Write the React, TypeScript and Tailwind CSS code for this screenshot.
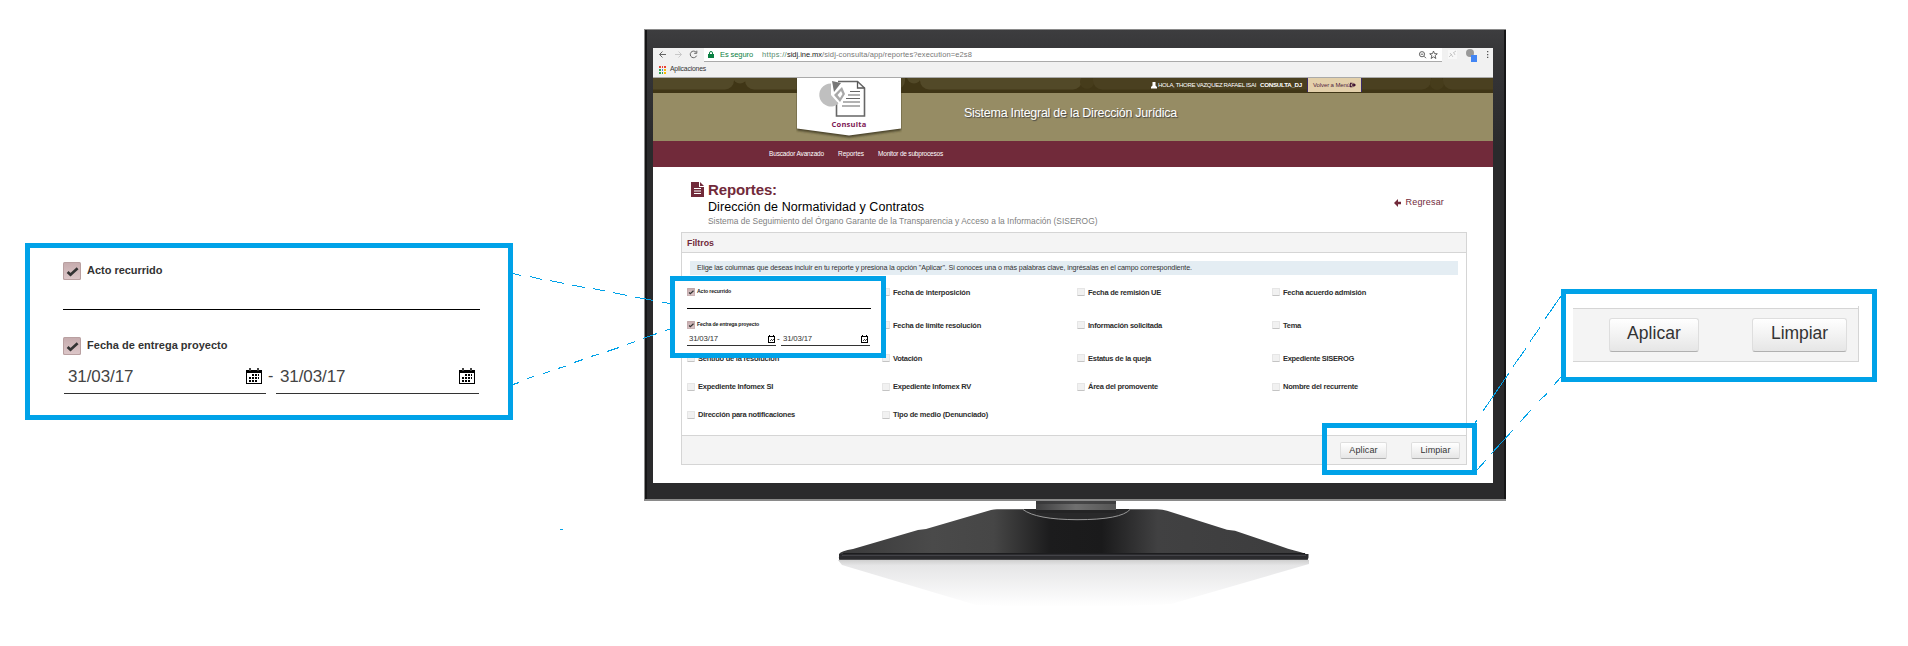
import { useLayoutEffect, useRef, useState } from "react";
import type { ReactNode } from "react";

/* One line of text whose tracking is adjusted so that it fills a given width. */
function Fit({ w, children, className = "" }: { w: number; children: string; className?: string }) {
  const ref = useRef<HTMLSpanElement>(null);
  const [spacing, setSpacing] = useState(0);
  useLayoutEffect(() => {
    if (!ref.current) return;
    const natural = ref.current.getBoundingClientRect().width;
    setSpacing((w - natural) / children.length);
  }, []);
  return (
    <span ref={ref} className={`inline-block whitespace-nowrap leading-none ${className}`} style={{ letterSpacing: spacing }}>
      {children}
    </span>
  );
}

function Calendar() {
  return (
    <svg viewBox="0 0 16 16" className="h-4 w-4" shapeRendering="crispEdges">
      <path fill="#000" fillRule="evenodd" d="M0 2h16v14H0zM1 5v10h14V5z" />
      <path fill="#444" d="M3 0h2v3H3zM11 0h2v3h-2z" />
      <path fill="#000" d="M6 6h2v2H6zM9 6h2v2H9zM12 6h1v2h-1zM3 9h2v2H3zM6 9h2v2H6zM9 9h2v2H9zM12 9h1v2h-1zM3 12h2v2H3zM6 12h2v2H6zM9 12h2v2H9z" />
    </svg>
  );
}

function SmallCalendar() {
  return (
    <svg viewBox="0 0 7 8" className="h-2 w-[7px]" shapeRendering="crispEdges" fill="#000">
      <path d="M0 1h7v1H0zM0 7h7v1H0zM0 2h1v5H0zM6 2h1v5H6zM1 0h1v1H1zM5 0h1v1H5z" />
      <path d="M3 4h1v1H3zM5 4h1v1H5zM2 5h1v1H2zM4 5h1v1H4z" opacity=".75" />
    </svg>
  );
}

function Checked({ className }: { className: string }) {
  return (
    <svg viewBox="0 0 18 18" className={className}>
      <defs>
        <linearGradient id="chk" x2="0" y2="1">
          <stop stopColor="#c6acae" />
          <stop offset="1" stopColor="#dcc6c8" />
        </linearGradient>
      </defs>
      <rect width="18" height="18" rx="1.5" fill="#b9a0a1" />
      <rect x="1" y="1" width="16" height="16" rx="1" fill="url(#chk)" />
      <path d="M4.6 10 7.500 12.700 14.600 6.300" fill="none" stroke="#333" strokeWidth="2.700" />
    </svg>
  );
}

function Box() {
  return <span className="h-2 w-2 shrink-0 rounded-[1px] border border-[#e6e6e6] border-b-[#c4c4c4] bg-[#f1f1f1]" />;
}

function Item({ label, w }: { label: string; w: number }) {
  return (
    <div className="flex items-center gap-[3px]">
      <Box />
      <Fit w={w} className="pt-px text-[7.500px] font-bold text-[#2d2d2d]">{label}</Fit>
    </div>
  );
}

function Button({ className, children }: { className: string; children: ReactNode }) {
  return (
    <button className={`flex items-center justify-center border border-[#dedede] border-b-[#b0b0b0] bg-linear-to-b from-white to-[#e6e6e6] text-[#333] ${className}`}>
      {children}
    </button>
  );
}

function BrowserBar() {
  return (
    <div className="flex h-[30px] flex-col border-b border-[#aaa] bg-[#f1f1f1]">
      <div className="flex h-[14px]">
        <svg viewBox="0 0 51 14" className="h-[14px] w-[51px]" fill="none" stroke="#666" strokeWidth="1">
          <path d="M13 6.5H6.5M9.5 3.5l-3 3 3 3" />
          <path stroke="#c9c9c9" d="M22 6.5h6.5M25.5 3.5l3 3-3 3" />
          <path d="M43 4.2a3.3 3.3 0 1 0 .6 3.5M43.8 2.7v2.6h-2.6" />
        </svg>
        <div className="flex h-[14px] w-[738px] items-center border-b border-[#aaa] bg-white pl-1">
          <svg viewBox="0 0 6 7" className="mr-[6px] h-[7px] w-[6px]" fill="#0b8043">
            <path d="M0 3h6v4H0z" />
            <path d="M1.500 3.500V2a1.500 1.500 0 0 1 3 0v1.500" fill="none" stroke="#0b8043" />
          </svg>
          <Fit w={33} className="mr-[9px] text-[7.500px] text-[#0b8043]">Es seguro</Fit>
          <Fit w={25} className="text-[7.500px] text-[#568c6e]">https://</Fit>
          <Fit w={35} className="text-[7.500px] text-[#222]">sidj.ine.mx</Fit>
          <Fit w={150} className="text-[7.500px] text-[#777]">/sidj-consulta/app/reportes?execution=e2s8</Fit>
          <svg viewBox="0 0 24 10" className="mr-[3px] ml-auto h-[10px] w-6" fill="none" stroke="#555" strokeWidth=".9">
            <circle cx="7" cy="4.2" r="2.600" />
            <path d="m9 6.200 2 2M5.700 4.200h2.600" />
            <path d="m18.500 1 1 2.600 2.800.2-2.200 1.800.8 2.900-2.400-1.600-2.400 1.600.8-2.900-2.200-1.800 2.800-.2z" />
          </svg>
        </div>
        <svg viewBox="0 0 51 14" className="h-[14px] w-[51px]">
          <rect x="6" y="2" width="9" height="9" fill="#f8f8f8" />
          <path d="m7 9 3-3m1-1 3-2M8 5l3 4m1-4 1 2" stroke="#bbb" fill="none" strokeWidth=".8" />
          <circle cx="28" cy="5" r="4" fill="#999" />
          <path d="M29 7h6v7h-6z" fill="#4285f4" />
          <path d="M45 3h1.300v1.300H45zM45 5.900h1.300v1.300H45zM45 8.800h1.300v1.300H45z" fill="#555" />
        </svg>
      </div>
      <div className="flex flex-1 items-center pl-[6px]">
        <svg viewBox="0 0 7 8" className="mr-1 h-2 w-[7px]" shapeRendering="crispEdges">
          <path fill="#ea4335" d="M0 0h2v2H0zM3 0h1v2H3zM5 0h2v2H5z" />
          <path fill="#34a853" d="M0 3h2v2H0zM3 6h1v2H3zM0 6h2v2H0z" />
          <path fill="#4285f4" d="M3 3h1v2H3z" />
          <path fill="#fbbc05" d="M5 3h2v2H5zM5 6h2v2H5z" />
        </svg>
        <Fit w={36} className="text-[6.800px] text-[#333]">Aplicaciones</Fit>
      </div>
    </div>
  );
}

function SiteHeader() {
  return (
    <header className="relative flex flex-col text-white">
      <div className="relative h-[15px] bg-[#403616]">
        <svg viewBox="0 0 840 15" className="absolute inset-0 h-[15px] w-[840px]" fill="#524928">
          <rect x="-20" y="-8" width="101" height="19.500" rx="9" />
          <circle cx="87" cy="-1.500" r="7" />
          <rect x="92" y="-8" width="160" height="19.500" rx="9" />
          <circle cx="261" cy="-1.500" r="7" />
          <rect x="267" y="-8" width="162" height="19.500" rx="9" />
          <circle cx="434" cy="4" r="7" fill="#463c1b" />
          <rect x="440" y="-8" width="338" height="19.500" rx="9" fill="#4a4020" />
          <circle cx="784" cy="5" r="7" fill="#463c1b" />
          <rect x="790" y="-8" width="70" height="19.500" rx="9" fill="#4a4020" />
        </svg>
        <div className="relative flex h-[14px] items-center pl-[498px]">
          <svg viewBox="0 0 6 7" className="mr-px h-[7px] w-[6px]" fill="#fff">
            <path d="M1.500 0h3v3.400L6 5v1.500H0V5l1.500-1.600z" />
          </svg>
          <Fit w={98} className="mr-1 text-[6px]">HOLA, THORE VAZQUEZ RAFAEL ISAI</Fit>
          <Fit w={42} className="text-[6.200px] font-bold">CONSULTA_DJ</Fit>
          <div className="ml-[5px] flex h-[14px] w-[55px] items-center border-x border-[#3b2c6b] bg-[#e3d0ab] pl-[5px] text-[#521f40]">
            <Fit w={37} className="text-[6px]">Volver a Menú</Fit>
            <svg viewBox="0 0 7 7" className="h-[6px] w-[6px]" fill="#3c1030">
              <path d="M0 1h3v1H1v3h2v1H0zM2 2.700h2V1l3 2.500L4 6V4.300H2z" />
            </svg>
          </div>
        </div>
      </div>
      <div className="flex h-12 bg-[#968c64] pt-[14px] pl-[311px]">
        <Fit w={213} className="text-[12.500px] [text-shadow:1px_1px_1px_#444]">Sistema Integral de la Dirección Jurídica</Fit>
      </div>
      <nav className="flex h-[26px] items-center gap-[14px] bg-[#712a3a] pl-[116px] text-[6.500px]">
        <Fit w={55}>Buscador Avanzado</Fit>
        <Fit w={26}>Reportes</Fit>
        <Fit w={65}>Monitor de subprocesos</Fit>
      </nav>
      <div className="absolute top-0 left-[143px] flex h-[62px] w-[106px] flex-col items-center">
        <svg viewBox="0 0 106 62" className="absolute inset-0 h-[62px] w-[106px]">
          <defs>
            <filter id="soft" x="-10%" y="-10%" width="120%" height="120%">
              <feGaussianBlur stdDeviation=".9" />
            </filter>
          </defs>
          <path d="M1 0h104v52.500L53 59.500 1 52.500z" fill="#3d3820" opacity=".85" filter="url(#soft)" />
          <path d="M1 0h104v50.500L53 57.500 1 50.500z" fill="#fff" />
          <path d="M42 3.500h19.500l7 6.500v28h-28V24" fill="none" stroke="#666" strokeWidth="1.600" />
          <path d="M61.500 3.500v6.500h7" fill="none" stroke="#555" strokeWidth="1.300" />
          <path d="M54 13.500h10M52 17h12M50 20.500h14M47 24h17M46 28h18" stroke="#666" strokeWidth="1.200" />
          <path d="M35 5.500v11.500l7.500 8.500a11.500 11.500 0 1 1-7.500-20z" fill="#bfbfbf" />
          <path d="m36 3 9 2-7 9z" fill="#777" />
          <path d="m46 9 3 7-5 8-6-7z" fill="#a8a8a8" />
          <path d="m45 13 1.500 3-2.500 4-2.500-3z" fill="#fff" />
        </svg>
        <Fit w={35} className="relative mt-[43px] font-['Open_Sans',sans-serif] text-[7.500px] font-bold text-[#7d1754]">Consulta</Fit>
      </div>
    </header>
  );
}

function DateField({ small, className }: { small?: boolean; className: string }) {
  return (
    <div className={`flex items-center justify-between border-[#333] ${className}`}>
      <Fit w={small ? 29 : 65.5} className={small ? "text-[7.800px] text-[#333]" : "text-[17px] text-[#444]"}>31/03/17</Fit>
      {small ? <SmallCalendar /> : <Calendar />}
    </div>
  );
}

/* The first two fields of column one are drawn by the expanded editor above the grid. */
const columns: [string, number][][] = [
  [["Sentido de la resolución", 81], ["Expediente Infomex SI", 75], ["Dirección para notificaciones", 97]],
  [["Fecha de interposición", 77], ["Fecha de límite resolución", 88], ["Votación", 29], ["Expediente Infomex RV", 78], ["Tipo de medio (Denunciado)", 95]],
  [["Fecha de remisión UE", 73], ["Información solicitada", 74], ["Estatus de la queja", 63], ["Área del promovente", 70]],
  [["Fecha acuerdo admisión", 83], ["Tema", 18], ["Expediente SISEROG", 71], ["Nombre del recurrente", 75]],
];

function Filters() {
  return (
    <section className="ml-[28px] flex h-[233px] w-[786px] flex-col border border-[#d5d5d5] bg-white">
      <div className="flex h-5 shrink-0 items-center border-b border-[#d5d5d5] bg-[#f4f4f4] pl-[5px]">
        <Fit w={27} className="pt-px text-[8.800px] font-bold text-[#712a3a]">Filtros</Fit>
      </div>
      <div className="mx-2 mt-2 flex h-[14px] shrink-0 items-center bg-[#e4edf3] pl-[7px]">
        <Fit w={495} className="text-[7.200px] text-[#333]">Elige las columnas que deseas incluir en tu reporte y presiona la opción "Aplicar". Si conoces una o más palabras clave, ingrésalas en el campo correspondiente.</Fit>
      </div>
      <div className="mt-px flex flex-1 pl-[5px]">
        {columns.map((col, i) => (
          <div key={i} className="grid w-[195px] shrink-0 grid-rows-[32px_34px_32px_25px_31px]">
            {i === 0 && <div className="row-span-2" />}
            {col.map(([label, w]) => <Item key={label} label={label} w={w} />)}
          </div>
        ))}
      </div>
      <div className="flex h-[29px] shrink-0 items-center justify-end gap-6 border-t border-[#d5d5d5] bg-[#f4f4f4] pr-[6px] text-[9px]">
        <Button className="h-[17px] w-[47px] rounded-[2px]"><Fit w={28.5}>Aplicar</Fit></Button>
        <Button className="h-[17px] w-[49px] rounded-[2px]"><Fit w={30}>Limpiar</Fit></Button>
      </div>
    </section>
  );
}

function Screen() {
  return (
    <div className="flex h-[435px] w-[840px] flex-col bg-white">
      <BrowserBar />
      <SiteHeader />
      <div className="flex h-[65px] shrink-0 items-start pt-[15px] pl-[38px]">
        <svg viewBox="0 0 13 15" className="mr-1 h-[15px] w-[13px]" fill="#712a3a">
          <path fillRule="evenodd" d="M0 0h8v5h5v10H0zM3 6v1h7V6zM3 8.500v1h7v-1zM3 11v1h7v-1z" />
          <path d="M9 0v4h4z" />
        </svg>
        <div className="flex flex-col items-start">
          <Fit w={69} className="text-[15px] font-bold text-[#712a3a]">Reportes:</Fit>
          <Fit w={216} className="mt-[4px] text-[12.500px] text-black">Dirección de Normatividad y Contratos</Fit>
          <Fit w={389.5} className="mt-[3px] text-[8.400px] text-[#808080]">Sistema de Seguimiento del Órgano Garante de la Transparencia y Acceso a la Información (SISEROG)</Fit>
        </div>
        <div className="mt-[16px] ml-auto flex items-center gap-[5px] pr-[49px]">
          <svg viewBox="0 0 7 8" className="h-2 w-[7px]" fill="#712a3a">
            <path d="M0 4 4 0v2.800h3v2.400H4V8z" />
          </svg>
          <Fit w={38.5} className="text-[9px] text-[#712a3a]">Regresar</Fit>
        </div>
      </div>
      <Filters />
    </div>
  );
}

function Stand() {
  return (
    <svg viewBox="644 501 862 110" className="h-[110px] w-[862px]">
      <defs>
        <linearGradient id="base" x2="1" y2="0">
          <stop stopColor="#3a3a3b" />
          <stop offset=".2" stopColor="#4a4a4a" />
          <stop offset=".33" stopColor="#464646" />
          <stop offset=".45" stopColor="#1c1c1d" />
          <stop offset=".56" stopColor="#1a1a1b" />
          <stop offset=".68" stopColor="#414142" />
          <stop offset="1" stopColor="#3c3c3d" />
        </linearGradient>
        <linearGradient id="reflection" x2="0" y2="1">
          <stop stopColor="#cfcfcf" />
          <stop offset=".12" stopColor="#e6e6e7" />
          <stop offset="1" stopColor="#fff" />
        </linearGradient>
        <linearGradient id="neck" x2="1" y2="0">
          <stop stopColor="#3f3f40" />
          <stop offset=".5" stopColor="#707070" />
          <stop offset="1" stopColor="#555" />
        </linearGradient>
      </defs>
      <path d="M838 560h471v4l-138 40q-80 5-195 1L842 565z" fill="url(#reflection)" />
      <path d="M839 554q2-3 14-5l65-19 8-1 65-19q3-.8 6-.8h160q6 0 10 1.500l60 19 8 1 53 18q16 4 20 6v5H839z" fill="url(#base)" />
      <path d="M839 554h469.500v3.500q0 2-2 2H840q-1.500 0-1-3z" fill="#2b2b2e" />
      <path d="M843 553.500h462" stroke="#1d1d1f" />
      <path d="M842 555.500h464" stroke="#4a4a4f" strokeWidth=".8" />
      <path d="M1023 509h107q-6 11-53 11-42 0-54-11z" fill="#29292a" />
      <path d="M1023 509.500q13 10 54 10.200 44 0 53-10.200" fill="none" stroke="#999" />
      <path d="M1036 501h80v12h-80z" fill="url(#neck)" />
      <path d="M1036 501h80v3h-80z" fill="#353536" opacity=".7" />
      <path d="M1036 510h80v3h-80z" fill="#242425" />
    </svg>
  );
}

function Connectors() {
  return (
    <svg viewBox="0 0 1908 646" className="absolute inset-0 h-[646px] w-[1908px]" fill="none" stroke="#00a2e8" shapeRendering="crispEdges">
      <path d="M513 273.500l8 2M530 276.500l12 3M550 280.500l14 3M572 285l13 2.500M593 288.500l12 2.500M613 292.500l14 3M635 297l18.500 3.500M662 302l8 1.500" />
      <path d="M513 384.500l6-2M527 379l7-3M543 373.500l7-2M558 368.500l8-2.500M574 362.500l9-3M591 356.500l8-2.500M607 351.500l12-4M627 344.500l8-3M643 338.500l14-5M665 330.500l5-1.500" />
      <path d="M1475 423l2-3M1483 411l26-38M1513 366.500l13-18M1530 341.500l10-14M1545 319l16-23" />
      <path d="M1477 470l9-10M1491 454l22-24M1520 422l11-12M1539 401l8-7.500M1554 385l7-8" />
      <path d="M560 529.500h3" />
    </svg>
  );
}

function FieldsZoom() {
  return (
    <div className="mt-[243px] ml-[25px] flex h-[177px] w-[488px] shrink-0 flex-col border-5 border-[#00a2e8] bg-white pl-[33px]">
      <div className="mt-[14px] flex h-[18px] gap-[6px]">
        <Checked className="h-[18px] w-[18px]" />
        <Fit w={75.5} className="pt-[3px] text-[11px] font-bold text-[#333]">Acto recurrido</Fit>
      </div>
      <div className="mt-[29px] h-px w-[417px] bg-black" />
      <div className="mt-[27px] flex h-[18px] gap-[6px]">
        <Checked className="h-[18px] w-[18px]" />
        <Fit w={140.5} className="pt-[3px] text-[11px] font-bold text-[#333]">Fecha de entrega proyecto</Fit>
      </div>
      <div className="mt-[5px] flex h-[34px] pl-px">
        <DateField className="w-[202px] border-b pr-1 pb-[1px] pl-[4px]" />
        <span className="w-[10px] pt-[8px] pl-[2px] text-[16px] leading-none text-[#444]">-</span>
        <DateField className="w-[203px] border-b pr-1 pb-[1px] pl-[4px]" />
      </div>
    </div>
  );
}

function Monitor() {
  return (
    <div className="mt-[29px] ml-[131px] flex w-[862px] shrink-0 flex-col">
      <div className="relative h-[472px] border-t border-b-2 border-l border-[#8a8a8a] bg-linear-to-b from-[#3d3d3f] from-0% via-[#363638] via-5% to-[#2a2a2c] to-25%">
        <div className="h-full border-x-2 border-[#161617] pt-[18px] pl-[6px]">
          <Screen />
        </div>
        {/* Expanded filter fields */}
        <div className="absolute top-[246px] left-[25px] flex h-[82px] w-[216px] flex-col border-5 border-[#00a2e8] bg-white pl-3">
          <div className="mt-[7px] flex h-2 items-center gap-[2px]">
            <Checked className="h-2 w-2" />
            <Fit w={34} className="text-[5.200px] font-bold text-[#222]">Acto recurrido</Fit>
          </div>
          <div className="mt-[12px] h-px w-[184px] shrink-0 bg-black" />
          <div className="mt-[12px] flex h-2 items-center gap-[2px]">
            <Checked className="h-2 w-2" />
            <Fit w={62} className="text-[5.200px] font-bold text-[#222]">Fecha de entrega proyecto</Fit>
          </div>
          <div className="mt-[4px] flex h-[13px]">
            <DateField small className="w-[89px] border-b pr-[1px] pl-[2px]" />
            <span className="w-[5px] pt-[2px] pl-[1px] text-[8px] leading-none">-</span>
            <DateField small className="w-[89px] border-b pr-[2px] pl-[2px]" />
          </div>
        </div>
        {/* Highlighted actions */}
        <div className="absolute top-[393px] left-[677px] h-[52px] w-[155px] border-5 border-[#00a2e8]" />
      </div>
      <Stand />
    </div>
  );
}

function ButtonsZoom() {
  return (
    <div className="mt-[289px] ml-[55px] h-[93px] w-[316px] shrink-0 border-5 border-[#00a2e8] bg-white pt-3 pl-[7px]">
      <div className="h-[56px] w-[286px] border-r border-[#d5d5d5] pt-[2px]">
        <div className="flex h-[54px] items-center justify-end gap-[53px] border-y border-[#d5d5d5] bg-[#f4f4f4] pr-[11px] text-[17.500px]">
          <Button className="h-[34px] w-[90px] rounded-[3px] pb-[2px]"><Fit w={54}>Aplicar</Fit></Button>
          <Button className="h-[34px] w-[95px] rounded-[3px] pb-[2px]"><Fit w={57}>Limpiar</Fit></Button>
        </div>
      </div>
    </div>
  );
}

export default function App() {
  return (
    <main className="relative flex h-[646px] w-[1908px] items-start overflow-hidden bg-white font-['Liberation_Sans',Arial,sans-serif]">
      <FieldsZoom />
      <Monitor />
      <ButtonsZoom />
      <Connectors />
    </main>
  );
}
